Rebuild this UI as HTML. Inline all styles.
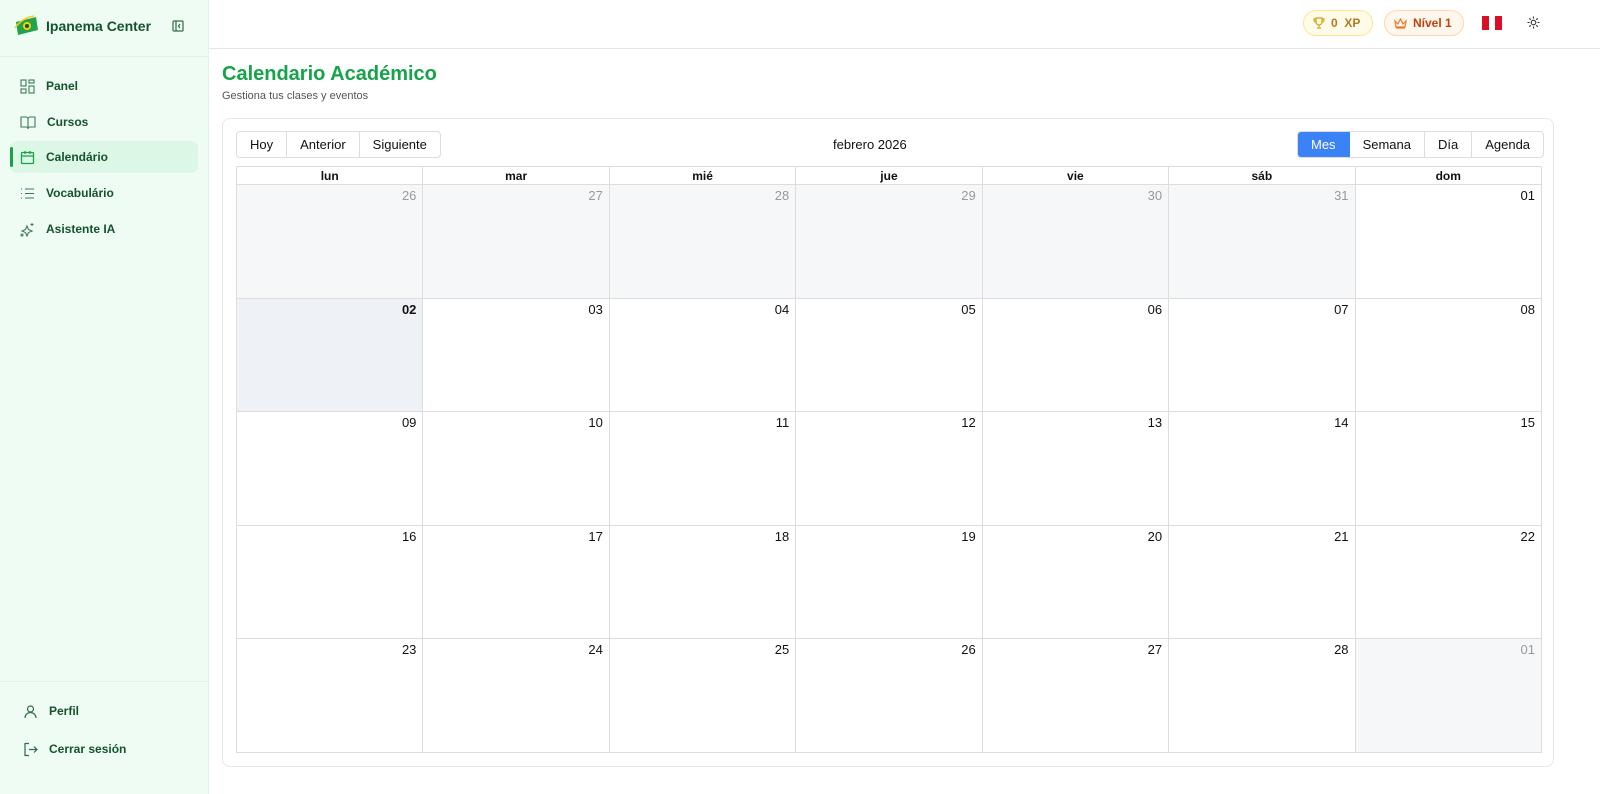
<!DOCTYPE html>
<html><head><meta charset="utf-8"><style>
*{box-sizing:border-box;margin:0;padding:0}
body{width:1600px;height:794px;font-family:"Liberation Sans","DejaVu Sans",sans-serif;background:#fff;position:relative;overflow:hidden;color:#111}
.sb{position:absolute;left:0;top:0;width:209px;height:794px;background:#effcf3;border-right:1px solid #e3f3e8}
.logo{position:absolute;left:14px;top:14px}
.brand{position:absolute;left:46px;top:18px;font-weight:bold;font-size:14px;color:#14532d}
.nav{position:absolute;left:10px;width:188px;height:32px;display:flex;align-items:center;font-size:12px;font-weight:bold;color:#14532d}
.nav svg{margin-left:10px;margin-right:11px}
.act{background:#dcf7e5;border-radius:7px}
.act:before{content:"";position:absolute;left:0;top:6px;width:3px;height:20px;background:#16a34a;border-radius:2px}
.hdr{position:absolute;left:209px;top:0;right:0;height:49px;border-bottom:1px solid #e5e7eb}
.pill{position:absolute;top:10px;height:26px;border-radius:13px;font-size:12px;font-weight:bold;display:flex;align-items:center;padding:0 9px;gap:6px;white-space:nowrap}
h1{position:absolute;left:222px;top:63px;font-size:20px;color:#16a34a}
.sub{position:absolute;left:222px;top:90px;font-size:11px;color:#555}
.card{position:absolute;left:222px;top:118px;width:1332px;height:649px;border:1px solid #e5e7eb;border-radius:8px}
.bg{position:absolute;top:131px;height:27px;display:flex;border:1px solid #ddd;border-radius:4px;overflow:hidden;font-size:13px}
.bg div{padding:0 13px;display:flex;align-items:center;border-right:1px solid #ddd}
.bg div:last-child{border-right:none}
table{position:absolute;left:236px;top:166px;width:1306px;border-collapse:collapse;table-layout:fixed}
th{height:18px;font-size:12px;border:1px solid #ddd;font-weight:bold}
td{height:113.6px;border:1px solid #ddd;vertical-align:top;text-align:right;padding:3px 6px;font-size:13px}
.o{background:#f6f7f9;color:#999}
.t{background:#eef2f6;font-weight:bold}
</style></head><body>
<div class="sb">
<svg class="logo" width="26" height="24" viewBox="0 0 26 24"><path d="M2 8 L22 3 L24 16 L4 21Z" fill="#22a34a"/><circle cx="13" cy="12" r="4" fill="#facc15"/><circle cx="13" cy="12" r="2" fill="#14532d"/><path d="M1 14 Q8 4 20 2" stroke="#facc15" stroke-width="1.5" fill="none"/></svg>
<div class="brand">Ipanema Center</div>
<svg style="position:absolute;left:172px;top:20px" width="12" height="12" viewBox="0 0 12 12" fill="none" stroke="#2f6b45" stroke-width="1.2"><rect x="1" y="1" width="10" height="10" rx="1"/><path d="M4 1v10M8 4L6.5 6 8 8"/></svg>
<div style="position:absolute;left:0;top:56px;width:208px;border-top:1px solid #e0f2e6"></div>
<div class="nav" style="top:70px"><svg width="15" height="15" viewBox="0 0 15 15" fill="none" stroke="#3f7a55" stroke-width="1.1"><rect x="1" y="1" width="5" height="6"/><rect x="9" y="1" width="5" height="3"/><rect x="9" y="7" width="5" height="7"/><rect x="1" y="10" width="5" height="4"/></svg>Panel</div>
<div class="nav" style="top:106px"><svg width="16" height="15" viewBox="0 0 16 15" fill="none" stroke="#3f7a55" stroke-width="1.1"><path d="M1 2h5a2 2 0 012 2v10a2 2 0 00-2-2H1zM15 2h-5a2 2 0 00-2 2v10a2 2 0 012-2h5z"/></svg>Cursos</div>
<div class="nav act" style="top:141px"><svg width="15" height="15" viewBox="0 0 15 15" fill="none" stroke="#16a34a" stroke-width="1.3"><rect x="1.5" y="2.5" width="12" height="11" rx="1"/><path d="M1.5 6h12M5 1v3M10 1v3"/></svg>Calendário</div>
<div class="nav" style="top:177px"><svg width="15" height="15" viewBox="0 0 15 15" fill="none" stroke="#3f7a55" stroke-width="1.1"><path d="M5 3h9M5 7.5h9M5 12h9M1 3h1M1 7.5h1M1 12h1"/></svg>Vocabulário</div>
<div class="nav" style="top:213px"><svg width="15" height="15" viewBox="0 0 15 15" fill="none" stroke="#3f7a55" stroke-width="1.1"><path d="M7 4l1.5 3.5L12 9l-3.5 1.5L7 14l-1.5-3.5L2 9l3.5-1.5zM12 1v3M10.5 2.5h3"/><circle cx="2" cy="13" r="1"/></svg>Asistente IA</div>
<div style="position:absolute;left:0;top:681px;width:208px;border-top:1px solid #e0f2e6"></div>
<div class="nav" style="top:695px;left:13px"><svg width="15" height="15" viewBox="0 0 15 15" fill="none" stroke="#2f6b45" stroke-width="1.2"><circle cx="7.5" cy="5" r="3"/><path d="M2 14a5.5 5.5 0 0111 0"/></svg>Perfil</div>
<div class="nav" style="top:733px;left:13px"><svg width="15" height="15" viewBox="0 0 15 15" fill="none" stroke="#2f6b45" stroke-width="1.2"><path d="M6 1.5H2v12h4M6 7.5h8M11 4.5l3 3-3 3"/></svg>Cerrar sesión</div>
</div>
<div class="hdr"></div>
<div class="pill" style="left:1303px;width:70px;background:#fefce8;border:1px solid #fde68a;color:#b7791f"><svg width="12" height="12" viewBox="0 0 12 12" fill="none" stroke="#d4a017" stroke-width="1.2"><path d="M3 1h6v4a3 3 0 01-6 0zM6 8v2M4 11h4M3 2H1v1a2 2 0 002 2M9 2h2v1a2 2 0 01-2 2"/></svg><span>0&nbsp; XP</span></div>
<div class="pill" style="left:1384px;width:80px;background:#fff7ed;border:1px solid #fed7aa;color:#c2410c"><svg width="13" height="11" viewBox="0 0 13 11" fill="none" stroke="#ea7a2a" stroke-width="1.2"><path d="M1 3l3 3 2.5-5 2.5 5 3-3-1 6H2zM2 10h9"/></svg><span>Nível 1</span></div>
<div style="position:absolute;left:1482px;top:16px;width:20px;height:14px;display:flex"><div style="flex:1;background:#d91023"></div><div style="flex:1;background:#fff"></div><div style="flex:1;background:#d91023"></div></div>
<svg style="position:absolute;left:1527px;top:16px" width="13" height="13" viewBox="0 0 13 13" fill="none" stroke="#333" stroke-width="1.1"><circle cx="6.5" cy="6.5" r="2.3"/><path d="M6.5 0.5v2M6.5 10.5v2M0.5 6.5h2M10.5 6.5h2M2.3 2.3l1.4 1.4M9.3 9.3l1.4 1.4M2.3 10.7l1.4-1.4M9.3 3.7l1.4-1.4"/></svg>
<h1>Calendario Académico</h1>
<div class="sub">Gestiona tus clases y eventos</div>
<div class="card"></div>
<div class="bg" style="left:236px"><div>Hoy</div><div>Anterior</div><div>Siguiente</div></div>
<div style="position:absolute;left:833px;top:137px;font-size:13px">febrero 2026</div>
<div class="bg" style="left:1297px"><div style="background:#3b82f6;color:#fff;border-color:#3b82f6">Mes</div><div>Semana</div><div>Día</div><div>Agenda</div></div>
<table>
<tr><th>lun</th><th>mar</th><th>mié</th><th>jue</th><th>vie</th><th>sáb</th><th>dom</th></tr>
<tr><td class="o">26</td><td class="o">27</td><td class="o">28</td><td class="o">29</td><td class="o">30</td><td class="o">31</td><td>01</td></tr>
<tr><td class="t">02</td><td>03</td><td>04</td><td>05</td><td>06</td><td>07</td><td>08</td></tr>
<tr><td>09</td><td>10</td><td>11</td><td>12</td><td>13</td><td>14</td><td>15</td></tr>
<tr><td>16</td><td>17</td><td>18</td><td>19</td><td>20</td><td>21</td><td>22</td></tr>
<tr><td>23</td><td>24</td><td>25</td><td>26</td><td>27</td><td>28</td><td class="o">01</td></tr>
</table>
</body></html>
